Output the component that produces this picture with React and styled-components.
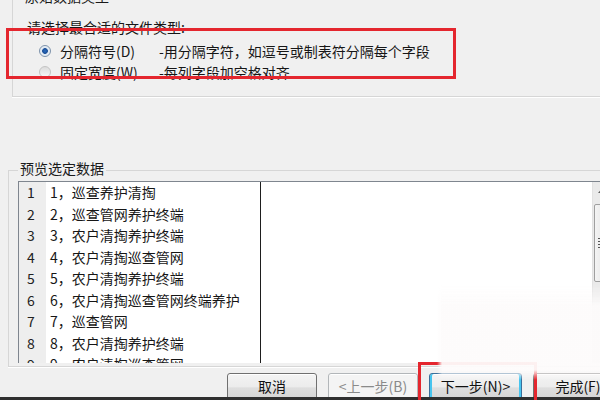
import React from 'react';
import styled, { createGlobalStyle } from 'styled-components';

const Global = createGlobalStyle`
  html, body { margin: 0; padding: 0; background: #f0f0f0; }
  body {
    width: 600px; height: 400px; overflow: hidden;
    font-family: "Noto Sans CJK SC", "Noto Sans", sans-serif;
  }
`;

const Page = styled.div`
  position: relative;
  width: 600px;
  height: 400px;
  overflow: hidden;
  background: #f0f0f0;
  display: flex;
  flex-direction: column;
  color: #161616;
  font-size: 14px;
`;

const Group = styled.fieldset`
  flex: none;
  box-sizing: border-box;
  width: 640px;
  min-inline-size: 0;
  margin: ${p => p.$top}px 0 0 ${p => p.$left}px;
  padding: ${p => p.$pad};
  border: none;
  border-left: 1px solid #d6d6d6;
  border-bottom: 1px solid #d6d6d6;
  border-top: ${p => (p.$topBorder ? '1px solid #d6d6d6' : 'none')};
  box-shadow: 0 1px 0 #ffffff;
`;

const Legend = styled.legend`
  margin-left: ${p => p.$indent}px;
  padding: 0 ${p => p.$side}px ${p => p.$below}px;
  font-size: 14px;
  line-height: 16px;
  color: #1a1a1a;
`;

const Prompt = styled.div`
  line-height: 16px;
  margin-bottom: 5px;
`;

const OptionRow = styled.label`
  display: flex;
  align-items: center;
  height: 21px;
  padding-left: 12px;
  white-space: nowrap;
`;

const Radio = styled.span`
  flex: none;
  box-sizing: border-box;
  width: 12px;
  height: 12px;
  margin-right: 9px;
  border-radius: 50%;
  border: 1px solid ${p => (p.$on ? '#7e93ab' : '#c4c4c4')};
  background: ${p =>
    p.$on
      ? 'radial-gradient(circle at 50% 50%, #2a6cc0 0, #1b4f97 2.5px, #dfe8f2 3.2px, #f4f7fa 100%)'
      : 'linear-gradient(#dcdcdc, #f7f7f7)'};
`;

const OptName = styled.span`
  flex: none;
  width: 99px;
`;

const Highlight = styled.div`
  position: absolute;
  left: ${p => p.$x}px;
  top: ${p => p.$y}px;
  width: ${p => p.$w}px;
  height: ${p => p.$h}px;
  box-sizing: border-box;
  border: 3px solid #e4262e;
  pointer-events: none;
`;

const ListBox = styled.div`
  box-sizing: border-box;
  width: 591px;
  height: 182px;
  display: flex;
  background: #ffffff;
  border-top: 1px solid #7f868f;
  border-left: 1px solid #7f868f;
`;

const DataArea = styled.div`
  flex: 1;
  overflow: hidden;
`;

const Row = styled.div`
  display: grid;
  grid-template-columns: 27px 214px 1fr;
  height: 21.55px;
  line-height: 21.5px;
  white-space: nowrap;
`;

const NumCell = styled.div`
  box-sizing: border-box;
  padding-left: 8px;
  background: #eeeeee;
  border-bottom: 1px solid #fbfbfb;
  color: #222;
`;

const TextCell = styled.div`
  padding-left: 4px;
  overflow: hidden;
`;

const BreakCell = styled.div`
  border-left: 1px solid #1e1e1e;
`;

const Scrollbar = styled.div`
  flex: none;
  width: 17px;
  box-sizing: border-box;
  background: #eaeaea;
  border-left: 1px solid #e2e2e2;
  display: flex;
  flex-direction: column;
  align-items: center;
`;

const ArrowBtn = styled.div`
  width: 17px;
  height: 18px;
  display: flex;
  align-items: center;
  justify-content: center;
`;

const Thumb = styled.div`
  box-sizing: border-box;
  width: 15px;
  height: 78px;
  margin-top: 4px;
  border: 1px solid #9f9f9f;
  border-radius: 2px;
  background: linear-gradient(to right, #f4f4f4, #e2e2e2);
  display: flex;
  flex-direction: column;
  justify-content: center;
  gap: 2px;
  padding-left: 3px;
`;

const Grip = styled.span`
  width: 6px;
  height: 1px;
  background: #555;
`;

const ButtonBar = styled.div`
  flex: none;
  display: flex;
  gap: 11px;
  height: 24px;
  margin-top: 6px;
  padding-left: 227px;
  overflow: hidden;
`;

const Button = styled.button`
  flex: none;
  width: ${p => p.$w}px;
  height: 30px;
  padding: 0 0 4px;
  box-sizing: border-box;
  font-family: "Noto Sans CJK SC", "Noto Sans", sans-serif;
  font-size: 14px;
  line-height: 20px;
  border-radius: 3px;
  color: ${p => (p.disabled ? '#8a8a8a' : '#111')};
  border: 1px solid ${p => (p.disabled ? '#b2b6b9' : p.$default ? '#3a6f9a' : '#707070')};
  background: ${p =>
    p.disabled
      ? '#f4f4f4'
      : 'linear-gradient(#f4f4f4, #ececec 45%, #dedede 50%, #d2d2d2)'};
  box-shadow: ${p =>
    p.$default ? 'inset 2px 0 0 #47c4ee, inset -2px 0 0 #47c4ee, inset 0 1px 0 #ffffff' : 'inset 0 1px 0 #ffffff'};
`;

const BottomStrip = styled.div`
  flex: none;
  height: 3px;
  background: #2f2f2f;
`;

const Glare = styled.div`
  position: absolute;
  left: 437px;
  top: 284px;
  width: 170px;
  height: 96px;
  pointer-events: none;
  background: linear-gradient(to right, rgba(255,255,255,0) 0, rgba(253,251,251,0.95) 5px);
  -webkit-mask-image: linear-gradient(to bottom, rgba(0,0,0,0) 0, #000 22px, #000 86px, rgba(0,0,0,0) 96px);
  mask-image: linear-gradient(to bottom, rgba(0,0,0,0) 0, #000 22px, #000 86px, rgba(0,0,0,0) 96px);
`;

const rows = [
  '1，巡查养护清掏',
  '2，巡查管网养护终端',
  '3，农户清掏养护终端',
  '4，农户清掏巡查管网',
  '5，农户清掏养护终端',
  '6，农户清掏巡查管网终端养护',
  '7，巡查管网',
  '8，农户清掏养护终端',
  '9，农户清掏巡查管网',
];

export default function App() {
  return (
    <Page>
      <Global />
      <Group $top={-12} $left={12} $pad="15px 0 14px 14px">
        <Legend $indent={-2} $side={0} $below={0}>原始数据类型</Legend>
        <Prompt>请选择最合适的文件类型:</Prompt>
        <OptionRow>
          <Radio $on />
          <OptName>分隔符号(D)</OptName>
          <span>-用分隔字符，如逗号或制表符分隔每个字段</span>
        </OptionRow>
        <OptionRow>
          <Radio />
          <OptName>固定宽度(W)</OptName>
          <span>-每列字段加空格对齐</span>
        </OptionRow>
      </Group>

      <Group $top={63} $left={8} $pad="0 0 3px 9px" $topBorder>
        <Legend $indent={0} $side={2} $below={5}>预览选定数据</Legend>
        <ListBox>
          <DataArea>
            {rows.map((t, i) => (
              <Row key={i}>
                <NumCell>{i + 1}</NumCell>
                <TextCell>{t}</TextCell>
                <BreakCell />
              </Row>
            ))}
          </DataArea>
          <Scrollbar>
            <ArrowBtn>
              <svg width="7" height="4" viewBox="0 0 7 4">
                <path d="M0 4 L3.5 0 L7 4 Z" fill="#606060" />
              </svg>
            </ArrowBtn>
            <Thumb>
              <Grip />
              <Grip />
              <Grip />
              <Grip />
            </Thumb>
          </Scrollbar>
        </ListBox>
      </Group>

      <ButtonBar>
        <Button $w={90}>取消</Button>
        <Button $w={90} disabled>&lt;上一步(B)</Button>
        <Button $w={93} $default>下一步(N)&gt;</Button>
        <Button $w={90}>完成(F)</Button>
      </ButtonBar>
      <BottomStrip />

      <Highlight $x={6} $y={28} $w={450} $h={51} />
      <Highlight $x={418} $y={362} $w={119} $h={50} />
      <Glare />
    </Page>
  );
}
